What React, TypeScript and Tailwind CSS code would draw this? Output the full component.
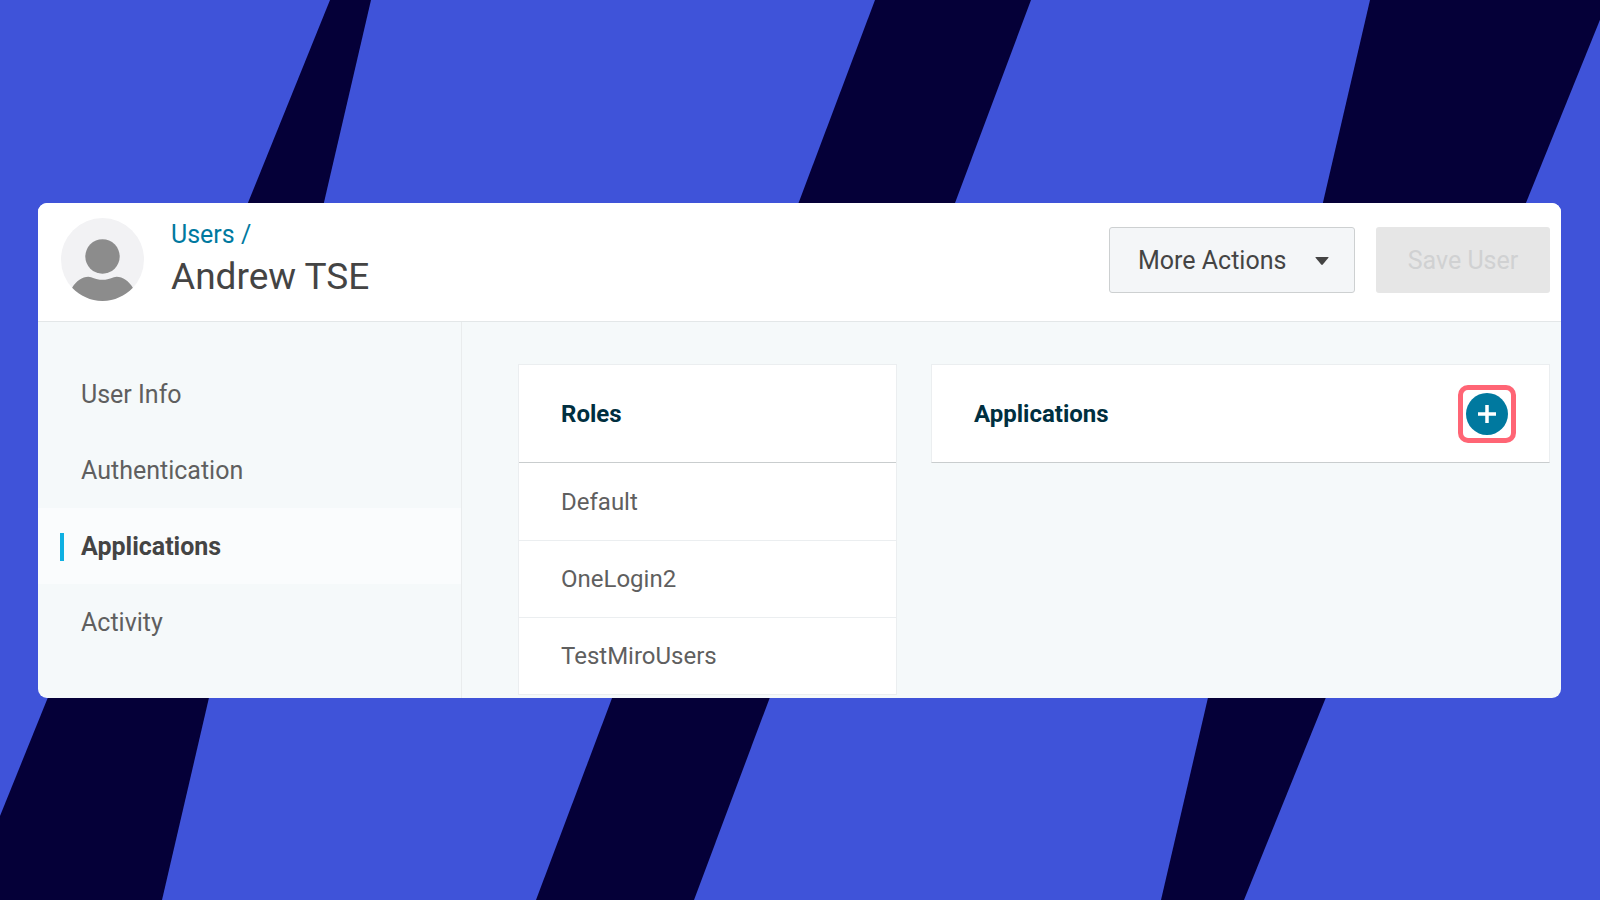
import React from 'react';

const navItems = ['User Info', 'Authentication', 'Applications', 'Activity'];
const roles = ['Default', 'OneLogin2', 'TestMiroUsers'];

const Backdrop: React.FC = () => (
  <svg
    className="absolute inset-0 h-full w-full"
    viewBox="0 0 1600 900"
    preserveAspectRatio="none"
    fill="#050038"
    aria-hidden="true"
  >
    <polygon points="330,0 371,0 162,900 -34,900" />
    <polygon points="875,0 1031,0 694,900 536,900" />
    <polygon points="1370,0 1608,0 1244,900 1161,900" />
  </svg>
);

const Avatar: React.FC = () => (
  <svg className="size-[83px] shrink-0" viewBox="0 0 82 82" role="img" aria-label="User avatar">
    <circle cx="41" cy="41" r="41" fill="#f2f2f4" />
    <circle cx="41" cy="38" r="17" fill="#8c8c8c" />
    <path
      d="M11 69 C15 62 21 58 27 58 C31 58 33 61 41 61 C49 61 51 58 55 58 C61 58 67 62 71 69 C63 77 53 82 41 82 C29 82 19 77 11 69 Z"
      fill="#8c8c8c"
    />
  </svg>
);

const Header: React.FC = () => (
  <header className="flex items-start justify-between border-b border-[#e3e7e8] bg-white pr-[11px] pl-[23px]">
    <div className="flex h-[118px] items-start gap-[27px] pt-[15px]">
      <Avatar />
      <div>
        <a href="#users" className="block text-[25px] leading-[34px] text-[#00799f]">
          Users /
        </a>
        <h1 className="text-[37px] leading-[50px] text-[#444444]">Andrew TSE</h1>
      </div>
    </div>
    <div className="flex gap-[21px] pt-6">
      <button
        type="button"
        className="flex h-[66px] w-[246px] items-center justify-between rounded-[3px] border border-[#cdd0d1] bg-[#f4f6f8] pt-0.5 pr-[25px] pl-[28px] text-[25px] text-[#444444]"
      >
        More Actions
        <svg className="h-2 w-[14px]" viewBox="0 0 14 8" fill="currentColor" aria-hidden="true">
          <path d="M1 0h12q1 0 .4.8L7.800 7.500q-.8.800-1.600 0L.6.800Q0 0 1 0z" />
        </svg>
      </button>
      <button
        type="button"
        disabled
        className="h-[66px] w-[174px] rounded-[3px] bg-[#e6e6e6] pt-0.5 text-[25px] text-[#d0d1d2]"
      >
        Save User
      </button>
    </div>
  </header>
);

const Sidebar: React.FC = () => (
  <nav className="w-[424px] shrink-0 border-r border-[#e9eced] pt-[34px]">
    {navItems.map((item) => {
      const active = item === 'Applications';
      return (
        <a
          key={item}
          href="#section"
          aria-current={active ? 'page' : undefined}
          className={`flex h-[76px] items-center pt-0.5 pl-[22px] text-[25px] ${
            active ? 'bg-[#fafcfd] font-bold text-[#444444]' : 'text-[#5f5f5f]'
          }`}
        >
          <span className={`mr-[17px] h-7 w-1 ${active ? 'bg-[#0fb0e2]' : ''}`} />
          {item}
        </a>
      );
    })}
  </nav>
);

const App: React.FC = () => {
  return (
    <div className="relative min-h-screen bg-[#3f53d9] pt-[203px] pr-[39px] pl-[38px] font-['Roboto',sans-serif]">
      <Backdrop />
      <main className="relative overflow-hidden rounded-[9px] bg-[#f5f9fa]">
        <Header />
        <div className="flex">
          <Sidebar />
          <div className="flex flex-1 items-start gap-[34px] pt-[42px] pr-[11px] pb-[3px] pl-[56px]">
            {/* Roles */}
            <section className="w-[379px] border border-[#ebeef0] bg-white">
              <h2 className="flex h-[98px] items-center border-b border-[#c9cdce] pl-[42px] text-2xl font-bold text-[#002f40]">
                Roles
              </h2>
              <ul>
                {roles.map((role) => (
                  <li
                    key={role}
                    className="flex h-[77px] items-center border-t border-[#ebeef0] pl-[42px] text-2xl text-[#5f5f5f] first:border-t-0"
                  >
                    {role}
                  </li>
                ))}
              </ul>
            </section>

            {/* Applications */}
            <section className="flex h-[99px] flex-1 items-center justify-between border border-[#ebeef0] border-b-[#c9cdce] bg-white pr-[33px] pl-[42px]">
              <h2 className="text-2xl font-bold text-[#002f40]">Applications</h2>
              <div className="rounded-[10px] border-5 border-[#ff6575] p-[3px]">
                <button
                  type="button"
                  aria-label="Add application"
                  className="flex size-[42px] items-center justify-center rounded-full bg-[#00799f] text-white"
                >
                  <svg className="size-[18px]" viewBox="0 0 18 18" stroke="currentColor" strokeWidth="3.500" aria-hidden="true">
                    <path d="M9 0v18M0 9h18" />
                  </svg>
                </button>
              </div>
            </section>
          </div>
        </div>
      </main>
    </div>
  );
};

export default App;
